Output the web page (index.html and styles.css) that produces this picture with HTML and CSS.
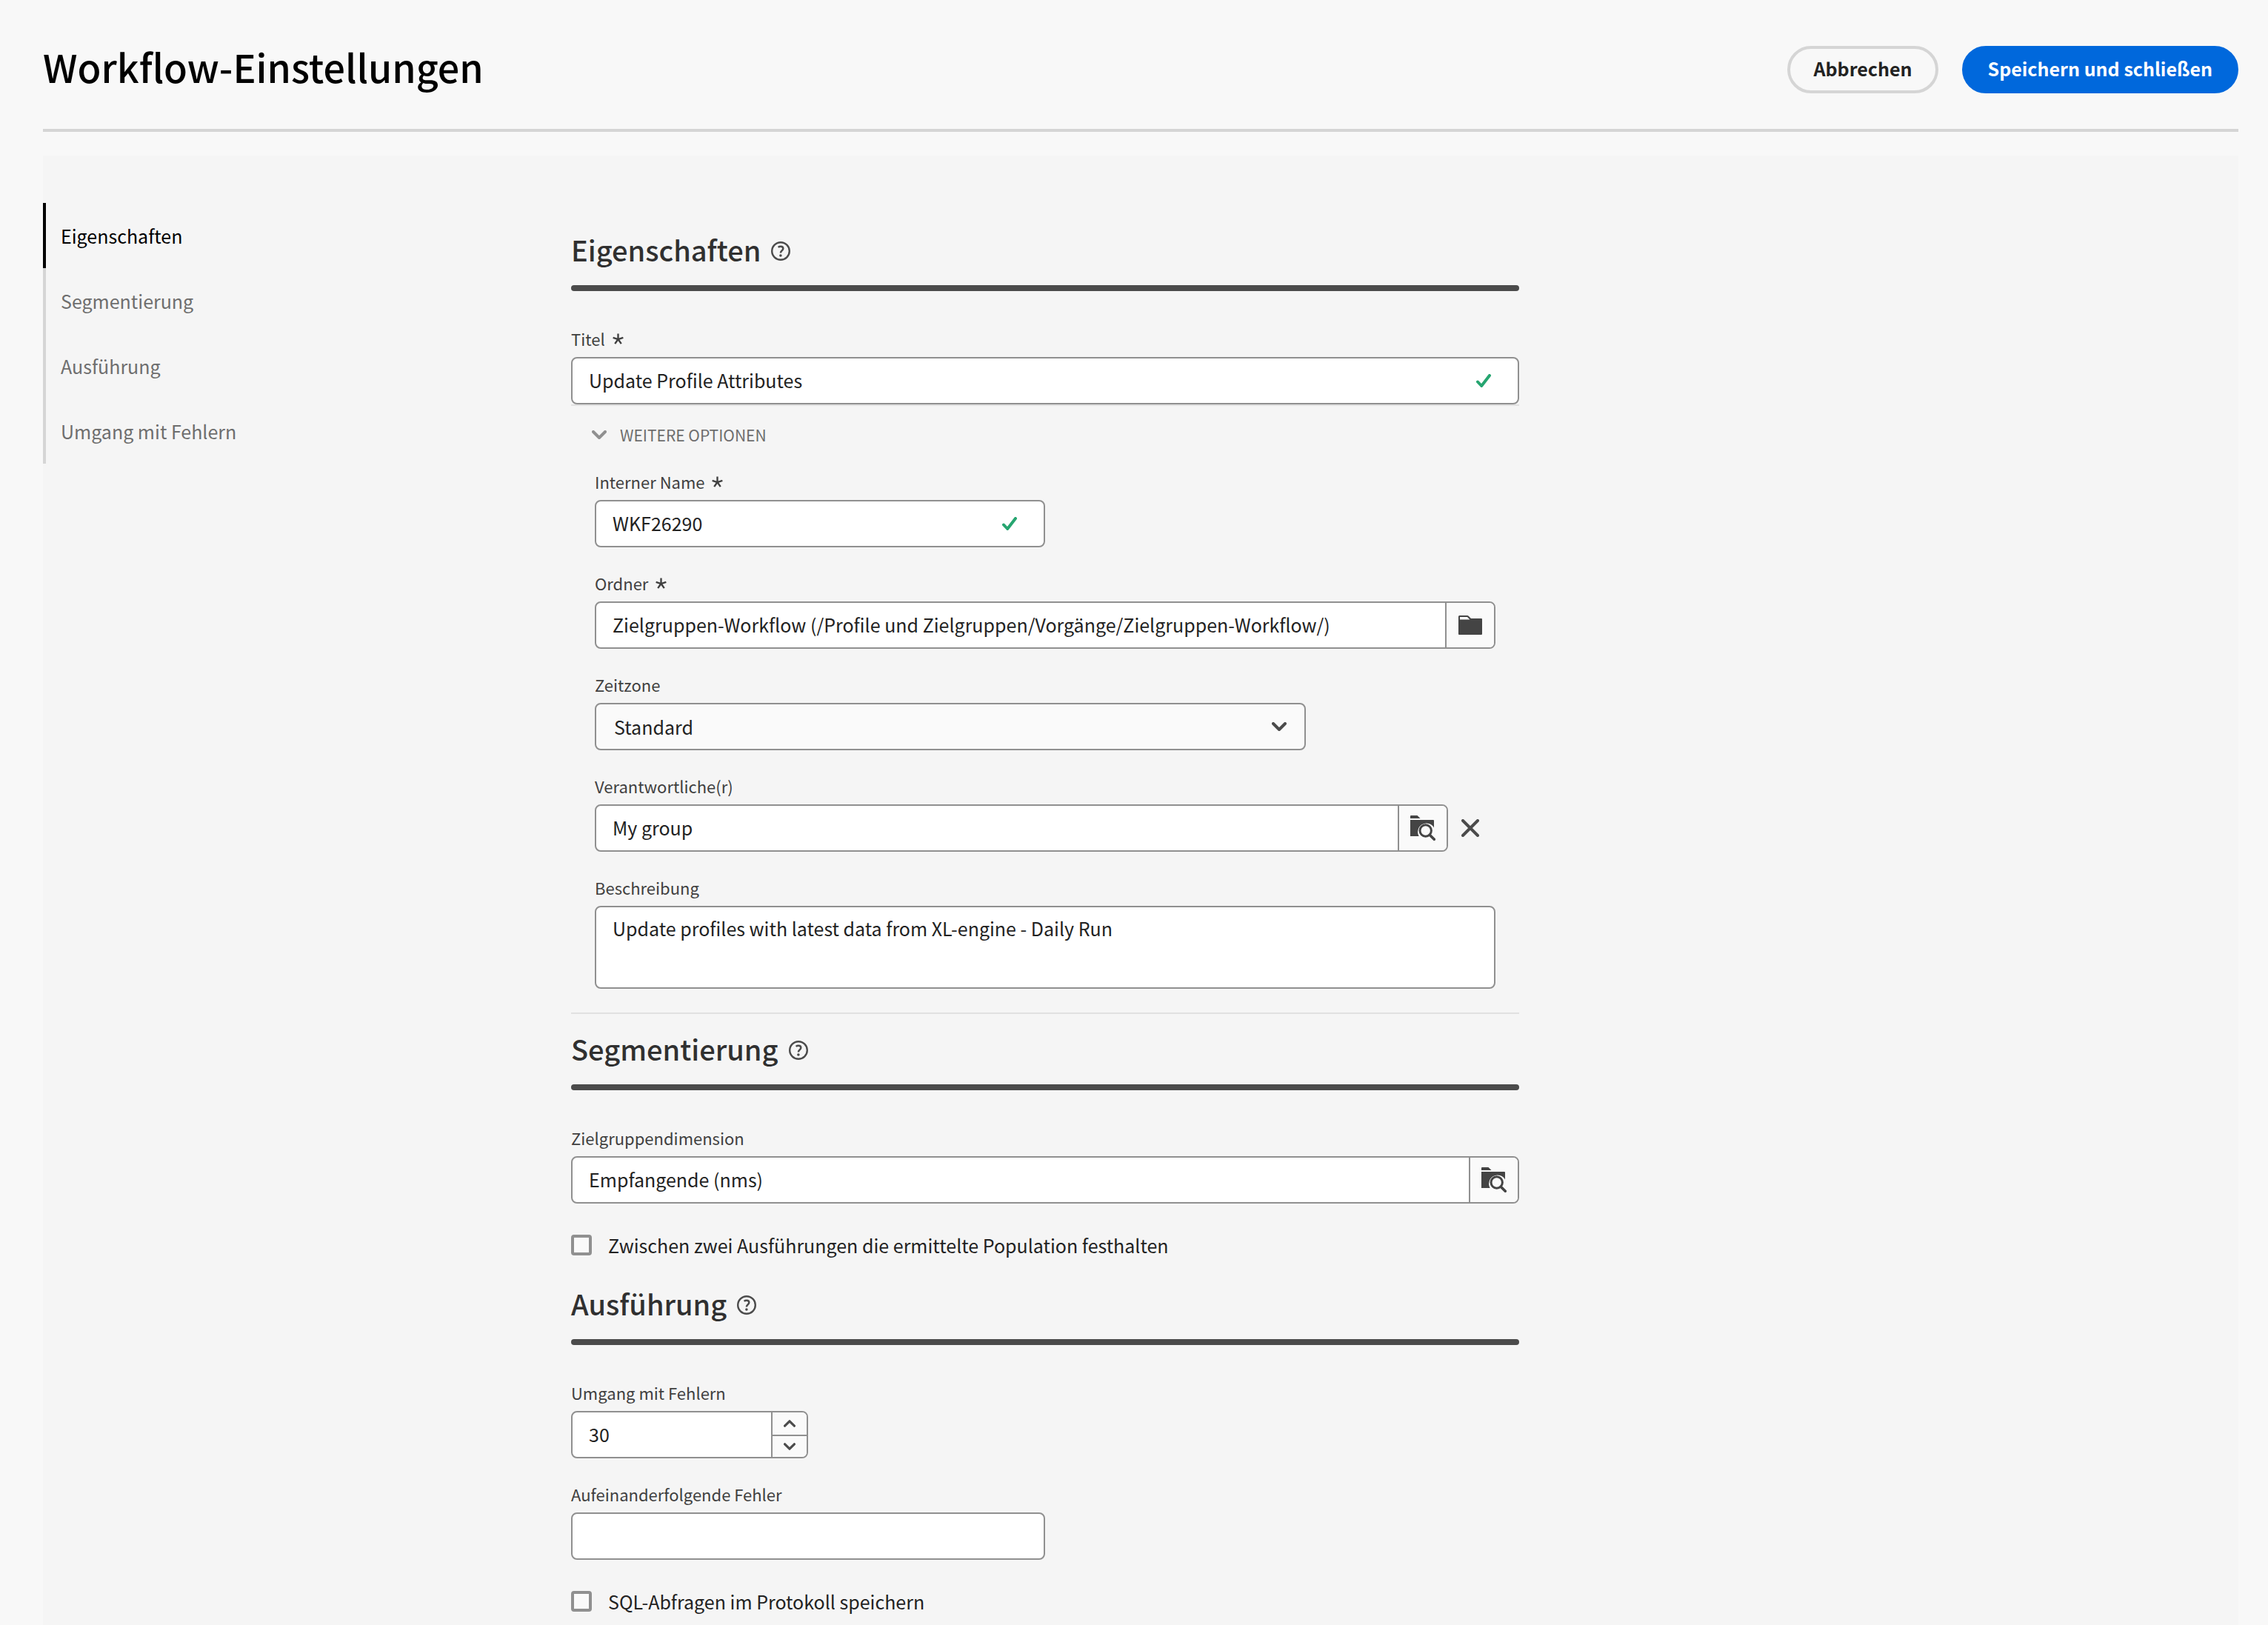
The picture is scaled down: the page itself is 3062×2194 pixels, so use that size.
FILE: index.html
```html
<!DOCTYPE html>
<html lang="de">
<head>
<meta charset="utf-8">
<meta name="viewport" content="width=device-width, initial-scale=1">
<title>Workflow-Einstellungen</title>
<link rel="stylesheet" href="styles.css">
</head>
<body>
<svg class="sprite" aria-hidden="true">
  <symbol id="star" viewBox="0 0 14 14"><path d="M7 7.500V.5M7 7.500L.6 5.400M7 7.500L13.400 5.400M7 7.500L3 13.200M7 7.500L11 13.200" fill="none" stroke="currentColor" stroke-width="2.200"/></symbol>
  <symbol id="check" viewBox="0 0 20 18"><path d="M2 10.500L7.200 16L18 2" fill="none" stroke="currentColor" stroke-width="4" stroke-linecap="round" stroke-linejoin="round"/></symbol>
  <symbol id="chevron" viewBox="0 0 20 12"><path d="M2 2L10 10L18 2" fill="none" stroke="currentColor" stroke-width="4" stroke-linecap="round" stroke-linejoin="round"/></symbol>
  <symbol id="help" viewBox="0 0 26 26"><circle cx="13" cy="13" r="11.800" fill="none" stroke="currentColor" stroke-width="2.400"/><path d="M9.600 7.900C10.800 6.900 12 6.700 13 6.700C15 6.700 16.300 7.900 16.300 9.500C16.300 12.300 12.900 12.600 12.900 15.500" fill="none" stroke="currentColor" stroke-width="2.500"/><circle cx="12.900" cy="19" r="1.800" fill="currentColor"/></symbol>
  <symbol id="folder" viewBox="0 0 32 26"><path d="M0 1.500Q0 0 1.500 0H12Q13 0 13.700.800L17 4H31Q32 4 32 5V25Q32 26 31 26H1Q0 26 0 25ZM2 2V5.600H15.400L12 2Z" fill="currentColor" fill-rule="evenodd"/></symbol>
  <symbol id="folder-search" viewBox="0 0 34 34"><path d="M0 1Q0 0 1 0H9.500L13.500 4H0ZM0 6H31Q32 6 32 7V16.500A11.300 11.300 0 0 0 11.700 28H0Z" fill="currentColor"/><circle cx="20.700" cy="20.500" r="7.700" fill="none" stroke="currentColor" stroke-width="3"/><path d="M26.200 26.200L32.300 32.300" stroke="currentColor" stroke-width="3.600" stroke-linecap="round"/></symbol>
  <symbol id="cross" viewBox="0 0 24 24"><path d="M2 2L22 22M22 2L2 22" fill="none" stroke="currentColor" stroke-width="4" stroke-linecap="round"/></symbol>
</svg>

<header class="page-header">
  <h1>Workflow-Einstellungen</h1>
  <div class="actions">
    <button type="button" class="button">Abbrechen</button>
    <button type="submit" form="settings" class="button button-accent">Speichern und schließen</button>
  </div>
</header>

<main class="panel">
  <nav class="side-nav" aria-label="Abschnitte">
    <a href="#properties" class="active" aria-current="true">Eigenschaften</a>
    <a href="#segmentation">Segmentierung</a>
    <a href="#execution">Ausführung</a>
    <a href="#errors">Umgang mit Fehlern</a>
  </nav>

  <form id="settings" class="settings">
    <section id="properties">
      <div class="section-title">
        <h2>Eigenschaften</h2>
        <button type="button" class="icon-button" aria-label="Hilfe"><svg class="icon-help"><use href="#help"/></svg></button>
      </div>
      <div class="field">
        <label for="title">Titel <svg class="icon-star"><use href="#star"/></svg></label>
        <div class="control valid">
          <input id="title" type="text" value="Update Profile Attributes" required>
          <svg class="icon-check"><use href="#check"/></svg>
        </div>
      </div>
      <details class="more" open>
        <summary><svg class="icon-chevron"><use href="#chevron"/></svg>WEITERE OPTIONEN</summary>
        <div class="fields">
          <div class="field">
            <label for="internal-name">Interner Name <svg class="icon-star"><use href="#star"/></svg></label>
            <div class="control valid half">
              <input id="internal-name" type="text" value="WKF26290" required>
              <svg class="icon-check"><use href="#check"/></svg>
            </div>
          </div>
          <div class="field">
            <label for="folder-path">Ordner <svg class="icon-star"><use href="#star"/></svg></label>
            <div class="control">
              <input id="folder-path" type="text" value="Zielgruppen-Workflow (/Profile und Zielgruppen/Vorgänge/Zielgruppen-Workflow/)" required>
              <button type="button" class="picker" aria-label="Ordner auswählen"><svg class="icon-folder"><use href="#folder"/></svg></button>
            </div>
          </div>
          <div class="field">
            <label for="timezone">Zeitzone</label>
            <div class="control select">
              <select id="timezone"><option>Standard</option></select>
              <svg class="icon-chevron"><use href="#chevron"/></svg>
            </div>
          </div>
          <div class="field">
            <label for="owner">Verantwortliche(r)</label>
            <div class="clearable">
              <div class="control">
                <input id="owner" type="text" value="My group">
                <button type="button" class="picker" aria-label="Gruppe suchen"><svg class="icon-search"><use href="#folder-search"/></svg></button>
              </div>
              <button type="button" class="clear" aria-label="Leeren"><svg class="icon-cross"><use href="#cross"/></svg></button>
            </div>
          </div>
          <div class="field">
            <label for="description">Beschreibung</label>
            <div class="control multiline">
              <textarea id="description" rows="2">Update profiles with latest data from XL-engine - Daily Run</textarea>
            </div>
          </div>
        </div>
      </details>
    </section>

    <section id="segmentation" class="segmentation">
      <div class="section-title">
        <h2>Segmentierung</h2>
        <button type="button" class="icon-button" aria-label="Hilfe"><svg class="icon-help"><use href="#help"/></svg></button>
      </div>
      <div class="field">
        <label for="dimension">Zielgruppendimension</label>
        <div class="control">
          <input id="dimension" type="text" value="Empfangende (nms)">
          <button type="button" class="picker" aria-label="Dimension suchen"><svg class="icon-search"><use href="#folder-search"/></svg></button>
        </div>
      </div>
      <label class="tick"><input type="checkbox">Zwischen zwei Ausführungen die ermittelte Population festhalten</label>
    </section>

    <section id="execution" class="execution">
      <div class="section-title">
        <h2>Ausführung</h2>
        <button type="button" class="icon-button" aria-label="Hilfe"><svg class="icon-help"><use href="#help"/></svg></button>
      </div>
      <div class="fields">
        <div class="field">
          <label for="history">Umgang mit Fehlern</label>
          <div class="control stepper">
            <input id="history" type="number" value="30">
            <div class="steps">
              <button type="button" aria-label="Erhöhen"><svg class="icon-step up"><use href="#chevron"/></svg></button>
              <button type="button" aria-label="Verringern"><svg class="icon-step"><use href="#chevron"/></svg></button>
            </div>
          </div>
        </div>
        <div class="field">
          <label for="consecutive">Aufeinanderfolgende Fehler</label>
          <div class="control medium"><input id="consecutive" type="text"></div>
        </div>
      </div>
      <label class="tick"><input type="checkbox">SQL-Abfragen im Protokoll speichern</label>
    </section>
  </form>
</main>
</body>
</html>
```
FILE: styles.css
```css
:root {
  --page: #f8f8f8;
  --panel: #f5f5f5;
  --surface: #fafafa;
  --line: #d5d5d5;
  --line-soft: #e1e1e1;
  --border: #909090;
  --text: #222222;
  --text-soft: #6e6e6e;
  --icon: #4b4b4b;
  --accent: #0068dc;
  --positive: #26a570;
}

* { box-sizing: border-box; }

body {
  margin: 0;
  min-height: 100vh;
  display: flex;
  flex-direction: column;
  padding: 0 40px 0 58px;
  background: var(--page);
  color: var(--text);
  font: 25px/40px "Noto Sans CJK SC", "Noto Sans", sans-serif;
}

.sprite { position: absolute; width: 0; height: 0; }

svg { display: block; flex: none; }

button, input, select, textarea { font: inherit; color: inherit; }

button { cursor: pointer; }

/* Header */
.page-header {
  display: flex;
  align-items: center;
  justify-content: space-between;
  padding: 54px 0 40px;
  border-bottom: 4px solid var(--line);
}

h1 {
  margin: 0;
  padding-bottom: 8px;
  font-size: 52px;
  line-height: 72px;
  font-weight: 500;
  color: #000;
}

.actions { display: flex; gap: 32px; }

.button {
  height: 64px;
  padding: 0 31px 4px;
  border: 4px solid var(--line);
  border-radius: 32px;
  background: transparent;
  font-weight: 700;
  line-height: 40px;
  white-space: nowrap;
}

.button-accent {
  border-color: var(--accent);
  background: var(--accent);
  color: #fff;
}

/* Panel */
.panel {
  flex: 1;
  display: grid;
  grid-template-columns: 713px minmax(0, 1280px);
  align-items: start;
  margin-top: 32px;
  background: var(--panel);
}

.side-nav {
  display: flex;
  flex-direction: column;
  padding-top: 64px;
}

.side-nav a {
  padding: 24px 20px;
  border-left: 4px solid var(--line);
  color: var(--text-soft);
  text-decoration: none;
}

.side-nav .active { border-color: #000; color: #000; }

/* Sections */
.settings { padding-top: 97px; }

.segmentation { padding-top: 17px; }

.execution { padding-top: 29px; }

.section-title {
  display: flex;
  flex-wrap: wrap;
  align-items: center;
  gap: 14px;
  margin-bottom: 41px;
}

.section-title::after {
  content: "";
  flex: 0 0 100%;
  height: 8px;
  border-radius: 4px;
  background: var(--icon);
}

h2 {
  margin: 0;
  padding-bottom: 4px;
  font-size: 38px;
  line-height: 60px;
  font-weight: 500;
  color: #303030;
}

.icon-button, .clear {
  padding: 0;
  border: 0;
  background: none;
  color: var(--icon);
}

/* Fields */
.fields { display: grid; gap: 25px; }

.field > label {
  display: flex;
  align-items: center;
  gap: 10px;
  padding-bottom: 2px;
  font-size: 22px;
  line-height: 46px;
  color: #404040;
}

.control {
  position: relative;
  display: flex;
  height: 64px;
  border: 2px solid var(--border);
  border-radius: 8px;
  background: #fff;
  overflow: hidden;
}

.control input, .control select, .control textarea {
  flex: 1;
  min-width: 0;
  margin: 0;
  padding: 0 22px 2px;
  border: 0;
  outline: 0;
  background: none;
  appearance: none;
}

.control input::-webkit-inner-spin-button { appearance: none; }

.control textarea { padding: 8px 22px; resize: none; overflow: hidden; }

.control select { padding: 0 24px; }

.valid, .select { align-items: center; }

.valid input, .select select { height: 60px; }

.valid { padding-right: 36px; }

.half { max-width: 608px; }

.medium { max-width: 640px; }

.multiline { height: 112px; }

.select { max-width: 960px; background: var(--surface); }

.select .icon-chevron {
  position: absolute;
  right: 24px;
  color: var(--icon);
  pointer-events: none;
}

.picker {
  width: 66px;
  display: grid;
  place-items: center;
  padding: 0;
  border: 0;
  border-left: 2px solid var(--border);
  background: var(--surface);
  color: #444;
}

.clearable { display: grid; grid-template-columns: 1fr 64px; }

.clear { display: grid; place-items: center; padding-right: 4px; }

.stepper { max-width: 320px; }

.steps {
  display: grid;
  grid-template-rows: 1fr 1fr;
  width: 48px;
  border-left: 2px solid var(--border);
}

.steps button {
  display: grid;
  place-items: center;
  padding: 0;
  border: 0;
  background: var(--surface);
  color: var(--icon);
}

.steps button + button { border-top: 2px solid var(--border); }

/* More options */
.more {
  border: solid var(--line-soft);
  border-width: 2px 0;
}

.more .fields { padding: 0 32px 32px; }

.more summary {
  display: flex;
  align-items: center;
  gap: 18px;
  padding: 19px 28px 20px;
  list-style: none;
  font-size: 21px;
  line-height: 40px;
  color: var(--text-soft);
}

/* Tick boxes */
.tick {
  display: flex;
  align-items: center;
  gap: 22px;
  margin-top: 36px;
}

.tick input {
  width: 28px;
  height: 28px;
  margin: 0;
  appearance: none;
  border: 4px solid var(--border);
  border-radius: 4px;
  background: var(--surface);
}

/* Icons */
.icon-star { width: 15px; height: 15px; }
.icon-check { width: 20px; height: 18px; color: var(--positive); }
.icon-chevron { width: 20px; height: 12px; color: var(--border); }
.icon-help { width: 26px; height: 26px; }
.icon-folder { width: 32px; height: 26px; }
.icon-search { width: 34px; height: 34px; }
.icon-cross { width: 24px; height: 24px; }
.icon-step { width: 16px; height: 10px; }
.up { transform: rotate(180deg); }
```
